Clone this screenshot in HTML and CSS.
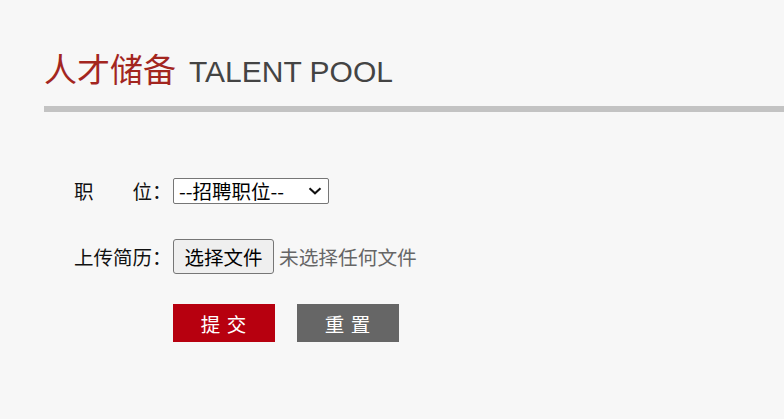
FILE: index.html
```html
<!DOCTYPE html>
<html lang="zh-CN">
<head>
<meta charset="utf-8">
<title>人才储备</title>
<link rel="stylesheet" href="styles.css">
</head>
<body>
<div class="page">
  <header class="head">
    <h1 class="title"><span class="title-cn">人才储备</span><span class="title-en">TALENT POOL</span></h1>
    <div class="rule"></div>
  </header>
  <form class="form">
    <div class="row row-select">
      <label class="label">职　　位：</label>
      <span class="select-wrap">
        <select class="select">
          <option>--招聘职位--</option>
        </select>
        <svg class="chev" width="14" height="8" viewBox="0 0 14 8"><path d="M1.5 1.2 L7 6.3 L12.5 1.2" fill="none" stroke="#111" stroke-width="2"/></svg>
      </span>
    </div>
    <div class="row row-file">
      <label class="label">上传简历：</label>
      <span class="file-btn">选择文件</span>
      <span class="file-name">未选择任何文件</span>
    </div>
    <div class="row row-actions">
      <button type="button" class="btn btn-submit">提 交</button>
      <button type="reset" class="btn btn-reset">重 置</button>
    </div>
  </form>
</div>
</body>
</html>
```
FILE: styles.css
```css
html, body {
  margin: 0;
  padding: 0;
  background: #f7f7f7;
}
body {
  font-family: "Noto Sans CJK SC", "Noto Sans", sans-serif;
  color: #111;
}
.page {
  width: 784px;
  height: 419px;
  overflow: hidden;
}
.head {
  padding-top: 48px;
  margin-left: 44px;
}
.title {
  margin: 0;
  display: flex;
  align-items: baseline;
  font-weight: normal;
  height: 46px;
}
.title-cn {
  font-family: "Noto Sans CJK SC", sans-serif;
  font-size: 33px;
  line-height: 40px;
  color: #a3261f;
}
.title-en {
  font-family: "Liberation Sans", Arial, sans-serif;
  font-size: 30px;
  line-height: 40px;
  color: #444;
  margin-left: 13px;
}
.rule {
  height: 6px;
  background: #c3c3c3;
  margin-top: 12px;
}
.form {
  padding-left: 74px;
  padding-top: 66px;
  font-size: 19.5px;
}
.row {
  display: flex;
  align-items: center;
}
.label {
  width: 99px;
  line-height: 26px;
  white-space: nowrap;
}
.row-select {
  height: 26px;
}
.select-wrap {
  position: relative;
  display: inline-block;
}
.select {
  -webkit-appearance: none;
  appearance: none;
  box-sizing: border-box;
  width: 156px;
  height: 26px;
  border: 1px solid #767676;
  border-radius: 2px;
  background: #fff;
  font-family: "Noto Sans CJK SC", sans-serif;
  font-size: 19.5px;
  line-height: 22px;
  padding: 0 0 0 5px;
  color: #000;
  display: block;
}
.chev {
  position: absolute;
  right: 7px;
  top: 9px;
  pointer-events: none;
}
.row-file {
  margin-top: 35px;
  height: 35px;
}
.file-btn {
  box-sizing: border-box;
  width: 101px;
  height: 35px;
  border: 1px solid #767676;
  border-radius: 3px;
  background: #efefef;
  display: flex;
  align-items: center;
  justify-content: center;
  color: #000;
  font-size: 19.5px;
}
.file-name {
  margin-left: 5px;
  color: #666;
  font-size: 19.7px;
}
.row-actions {
  margin-top: 30px;
  padding-left: 99px;
  gap: 22px;
}
.btn {
  width: 102px;
  height: 38px;
  border: none;
  padding: 0;
  margin: 0;
  color: #fff;
  font-family: "Noto Sans CJK SC", sans-serif;
  font-size: 19.5px;
  letter-spacing: 1px;
  cursor: pointer;
}
.btn-submit {
  background: #b7000f;
}
.btn-reset {
  background: #666;
}
```
